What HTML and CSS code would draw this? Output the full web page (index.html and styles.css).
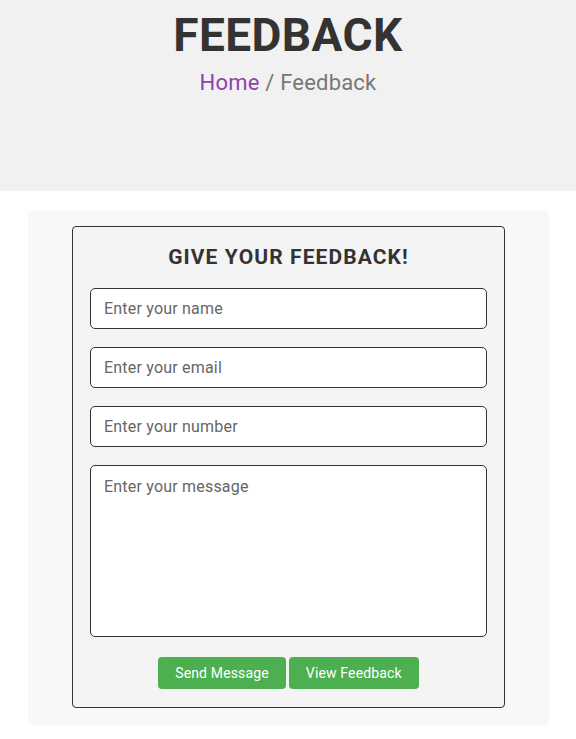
FILE: index.html
```html
<!DOCTYPE html>
<html lang="en">
<head>
<meta charset="utf-8">
<title>Feedback</title>
<link rel="stylesheet" href="styles.css">
</head>
<body>
<header class="banner">
  <h1 class="banner-title">FEEDBACK</h1>
  <p class="crumbs"><a class="crumb-link" href="#">Home</a> / Feedback</p>
</header>
<main class="page">
  <section class="panel">
    <form class="feedback-form">
      <h2 class="form-title">GIVE YOUR FEEDBACK!</h2>
      <input class="field" type="text" placeholder="Enter your name">
      <input class="field" type="email" placeholder="Enter your email">
      <input class="field" type="text" placeholder="Enter your number">
      <textarea class="field field-area" placeholder="Enter your message"></textarea>
      <div class="actions">
        <button class="btn" type="button">Send Message</button>
        <button class="btn" type="button">View Feedback</button>
      </div>
    </form>
  </section>
</main>
</body>
</html>
```
FILE: styles.css
```css
* { box-sizing: border-box; }
body {
  margin: 0;
  font-family: "Roboto", "Liberation Sans", sans-serif;
  background: #fff;
  color: #333;
}
.banner {
  background: #f1f1f1;
  height: 191px;
  text-align: center;
  padding-top: 10px;
}
.banner-title {
  margin: 0;
  font-size: 46px;
  line-height: 50px;
  font-weight: 700;
  letter-spacing: 0.4px;
  color: #333;
}
.crumbs {
  margin: 10px 0 0;
  font-size: 22px;
  line-height: 26px;
  color: #777;
  letter-spacing: 0.2px;
}
.crumb-link {
  color: #8e44ad;
  text-decoration: none;
}
.page {
  padding: 19px 27px 0 28px;
}
.panel {
  background: #f8f8f8;
  border-radius: 5px;
  padding: 16px 44px 18px;
}
.feedback-form {
  background: #f4f4f4;
  border: 1px solid #333;
  border-radius: 4px;
  padding: 14px 17px 18px;
  display: flex;
  flex-direction: column;
  gap: 18px;
}
.form-title {
  margin: 0 0 -3px;
  text-align: center;
  font-size: 21px;
  line-height: 32px;
  font-weight: 700;
  letter-spacing: 1.1px;
  color: #333;
}
.field {
  display: block;
  width: 100%;
  height: 41px;
  border: 1px solid #333;
  border-radius: 5px;
  background: #fff;
  padding: 0 13px;
  font-family: inherit;
  font-size: 16px;
  letter-spacing: 0.2px;
  color: #333;
}
.field::placeholder { color: #666; }
.field-area {
  height: 172px;
  padding-top: 11px;
  resize: none;
}
.actions {
  display: flex;
  justify-content: center;
  gap: 3px;
  margin-top: 2px;
}
.btn {
  background: #4caf50;
  color: #fff;
  border: none;
  border-radius: 4px;
  height: 32px;
  padding: 0 17px;
  font-family: inherit;
  font-size: 14px;
  letter-spacing: 0.15px;
}
```
